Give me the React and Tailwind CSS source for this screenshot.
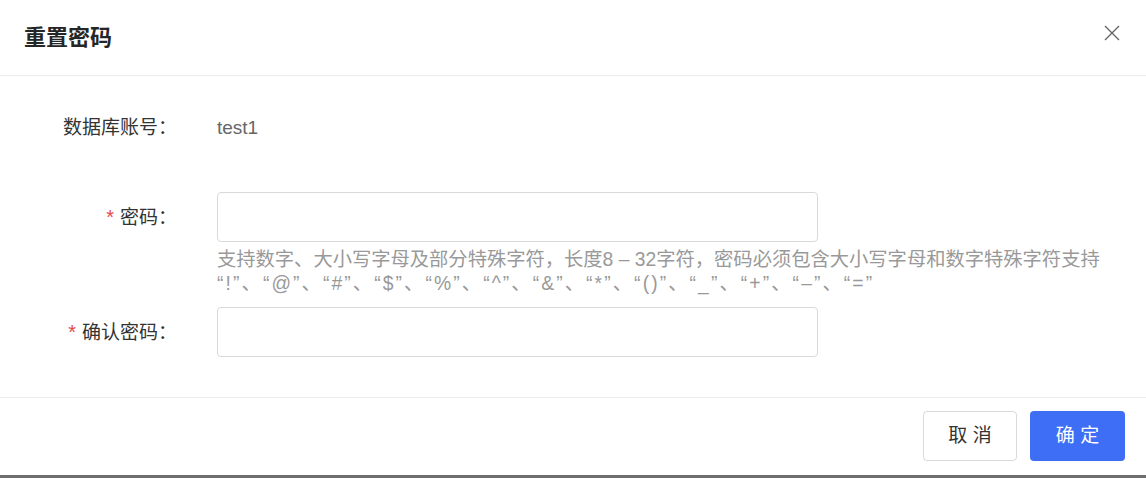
import React from 'react';

const FONT = { fontFamily: '"Liberation Sans", "Noto Sans CJK SC", sans-serif' };

function FormRow({ label, required, children }) {
  return (
    <div className="flex items-center">
      <div className="w-[177px] shrink-0 text-right text-[19px] text-[#333] leading-[24px]">
        {required && <span className="text-[#e5484d] mr-[6px] text-[20px]">*</span>}
        {label}：
      </div>
      <div className="ml-[40px] flex-1">{children}</div>
    </div>
  );
}

export default function App() {
  return (
    <div className="w-[1146px] h-[478px] flex flex-col bg-white overflow-hidden" style={FONT}>
      {/* Header */}
      <div className="h-[76px] shrink-0 flex items-center justify-between pl-[24px] pr-[26px] border-b border-[#ececec]">
        <h1 className="text-[22px] font-bold text-[#262626]">重置密码</h1>
        <button className="self-start mt-[25px] text-[#666]">
          <svg viewBox="0 0 16 16" className="w-[16px] h-[16px]" fill="none" stroke="currentColor" strokeWidth="1.4">
            <path d="M1 1L15 15M15 1L1 15" />
          </svg>
        </button>
      </div>

      {/* Body */}
      <div className="flex-1 flex flex-col pt-[27px]">
        <div className="h-[50px] flex items-center">
          <FormRow label="数据库账号">
            <span className="text-[19px] text-[#666]">test1</span>
          </FormRow>
        </div>

        <div className="mt-[39px]">
          <FormRow label="密码" required>
            <input className="w-[601px] h-[50px] border border-[#d9d9d9] rounded-[4px] outline-none px-3" />
          </FormRow>
          <div className="ml-[217px] mt-[6px] text-[19.3px] leading-[24px] text-[#999] whitespace-nowrap">
            支持数字、大小写字母及部分特殊字符，长度8 – 32字符，密码必须包含大小写字母和数字特殊字符支持
            <br />
            <span className="tracking-[2.1px]">
              “!”、“@”、“#”、“$”、“%”、“^”、“&amp;”、“*”、“()”、“_”、“+”、“–”、“=”
            </span>
          </div>
        </div>

        <div className="mt-[11px]">
          <FormRow label="确认密码" required>
            <input className="w-[601px] h-[50px] border border-[#d9d9d9] rounded-[4px] outline-none px-3" />
          </FormRow>
        </div>
      </div>

      {/* Footer */}
      <div className="h-[78px] shrink-0 border-t border-[#ececec] flex items-start justify-end gap-[13px] pt-[13px] pr-[21px]">
        <button className="w-[94px] h-[50px] border border-[#d9d9d9] rounded-[4px] bg-white text-[19px] text-[#333]">
          取 消
        </button>
        <button className="w-[95px] h-[50px] rounded-[4px] bg-[#3e6ef5] text-[19px] text-white">
          确 定
        </button>
      </div>
      <div className="h-[3px] shrink-0 bg-[#6e6e6e]" />
    </div>
  );
}
